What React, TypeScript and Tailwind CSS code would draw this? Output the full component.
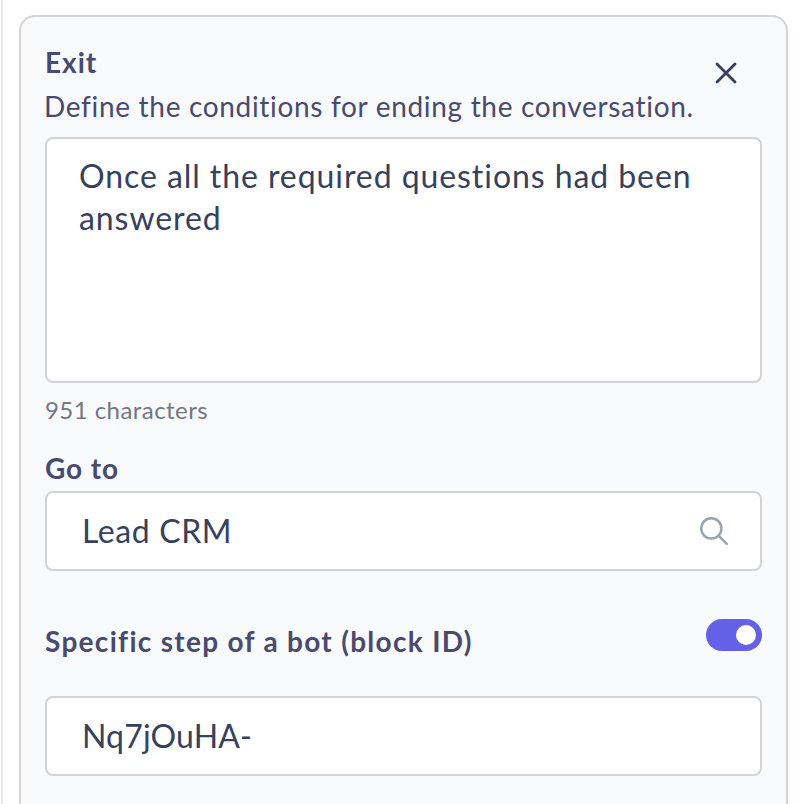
import { useState } from 'react'

const fieldClass = 'w-full rounded-lg border-2 border-[#d2d3d9] bg-white text-[32px] text-[#36415d]'

export default function App() {
  const [specificStep, setSpecificStep] = useState(true)

  return (
    <div className="h-[804px] overflow-hidden bg-white pl-px font-['Lato',sans-serif]">
      <div className="h-full border-l-2 border-[#e5e7ee] pl-4 pr-3 pt-[15px]">
        <section className="h-[900px] rounded-2xl border-2 border-[#d2d4d8] bg-[#f9fafc] px-6 pt-[27px] text-[28px] text-[#484a70]">
          {/* Header */}
          <header className="flex justify-between">
            <div className="whitespace-nowrap">
              <h2 className="h-[44px] font-bold leading-[36px] tracking-[1px]">Exit</h2>
              <p className="-ml-px h-[49px] leading-[36px] tracking-[0.68px]">Define the conditions for ending the conversation.</p>
            </div>
            <button aria-label="Close" className="mr-[22px] mt-[15px] h-7 w-7 shrink-0 text-[#363e5f]">
              <svg viewBox="0 0 28 28" className="h-7 w-7" fill="none" stroke="currentColor" strokeWidth="2.8" strokeLinecap="round">
                <path d="M5 5 23 23M23 5 5 23" />
              </svg>
            </button>
          </header>

          <div className={`${fieldClass} h-[246px] px-8 pt-4 leading-[42px] tracking-[0.93px]`}>
            Once all the required questions had been<br />answered
          </div>
          <p className="mt-[9px] h-[56px] text-2xl leading-9 tracking-[0.45px] text-[#737785]">951 characters</p>

          {/* Destination */}
          <h3 className="h-[43px] font-bold leading-10 tracking-[0.9px]">Go to</h3>
          <div className={`${fieldClass} flex h-20 items-center justify-between pl-[35px] pr-8`}>
            <span className="tracking-[0.6px]">Lead CRM</span>
            <svg viewBox="0 0 28 28" className="h-7 w-7" fill="none" stroke="#9ca3af" strokeWidth="2.5" strokeLinecap="round">
              <circle cx="11.3" cy="11.4" r="10.1" />
              <path d="m18.8 18.9 7.9 7.9" />
            </svg>
          </div>

          {/* Block ID */}
          <div className="mt-12 flex h-[77px] items-start justify-between">
            <h3 className="whitespace-nowrap pt-0.5 font-bold leading-10 tracking-[1.3px]">Specific step of a bot (block ID)</h3>
            <button
              role="switch"
              aria-checked={specificStep}
              aria-label="Specific step"
              onClick={() => setSpecificStep(!specificStep)}
              className={`flex h-8 w-14 items-center rounded-full px-1.5 ${specificStep ? 'justify-end bg-[#6460e8]' : 'justify-start bg-gray-300'}`}
            >
              <span className="h-5 w-5 rounded-full bg-white" />
            </button>
          </div>
          <div className={`${fieldClass} flex h-20 items-center px-[35px]`}>
            <span className="tracking-[0.15px]">Nq7jOuHA-</span>
          </div>
        </section>
      </div>
    </div>
  )
}
